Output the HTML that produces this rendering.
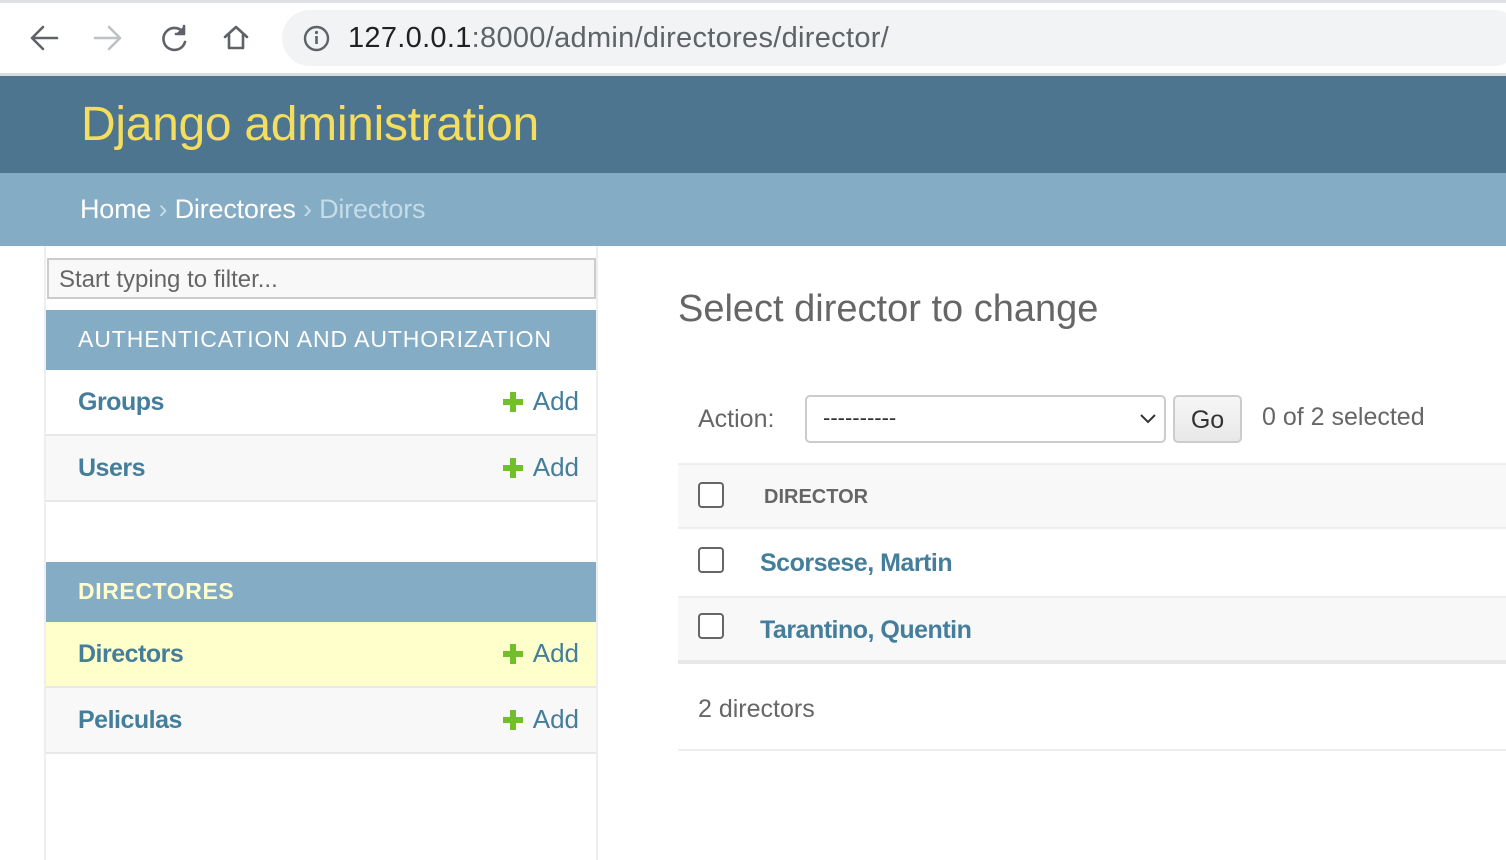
<!DOCTYPE html>
<html><head><meta charset="utf-8"><style>
*{margin:0;padding:0;box-sizing:border-box}
body{width:1506px;height:860px;overflow:hidden;background:#fff;font-family:"Liberation Sans",sans-serif;position:relative}
.a{position:absolute}
.row{position:absolute;left:46px;width:550px;height:66px;border-bottom:2px solid #e8e8e8}
.row .n{position:absolute;left:32px;top:18px;font-size:25px;font-weight:bold;color:#447e9b;letter-spacing:-0.5px}
.row .ad{position:absolute;right:17px;top:16px;font-size:26px;color:#447e9b}
.row .ad i{display:inline-block;width:20px;height:20px;margin-right:10px;position:relative;top:2px;background:linear-gradient(#70bf2b,#70bf2b) center/6px 20px no-repeat,linear-gradient(#70bf2b,#70bf2b) center/20px 6px no-repeat}
.cap{position:absolute;left:46px;width:550px;height:60px;background:#84acc5;color:#fff;font-size:23px;letter-spacing:0.9px;padding:16px 0 0 32px}
.cb{position:absolute;left:698px;width:26px;height:26px;border:2px solid #666;border-radius:4px;background:#fff}
.lnk{position:absolute;left:760px;font-size:25px;font-weight:bold;color:#447e9b;letter-spacing:-0.5px}
</style></head><body>
<div class="a" style="left:0;top:0;width:1506px;height:3px;background:#dee1e6"></div>
<div class="a" style="left:0;top:73px;width:1506px;height:3px;background:#dadce0"></div>
<svg class="a" style="left:25px;top:20px" width="240" height="36" viewBox="0 0 240 36">
<g fill="none" stroke-width="2.6" stroke-linecap="round" stroke-linejoin="round">
<path d="M32 18H7M18 7L7 18l11 11" stroke="#5f6368"/>
<path d="M70 18h25M84 7l11 11-11 11" stroke="#bdc1c6"/>
<path d="M158 12a11 11 0 1 0 2 10" stroke="#5f6368"/>
<path d="M159 6v8h-8" stroke="#5f6368" fill="#5f6368"/>
<path d="M200 17l11-10 11 10M204 14v14h14V14" stroke="#5f6368"/>
</g></svg>
<div class="a" style="left:282px;top:10px;width:1240px;height:56px;border-radius:28px;background:#f1f3f4"></div>
<svg class="a" style="left:303px;top:25px" width="27" height="27" viewBox="0 0 27 27"><circle cx="13.5" cy="13.5" r="11.5" fill="none" stroke="#5f6368" stroke-width="2.4"/><rect x="12.2" y="11" width="2.6" height="8" fill="#5f6368"/><circle cx="13.5" cy="7.5" r="1.6" fill="#5f6368"/></svg>
<div class="a" style="left:348px;top:22px;font-size:29px;color:#202124;letter-spacing:0.3px">127.0.0.1<span style="color:#5f6368">:8000/admin/directores/director/</span></div>
<div class="a" style="left:0;top:76px;width:1506px;height:97px;background:#4d7590"></div>
<div class="a" style="left:81px;top:97px;font-size:48px;color:#f5dd5d;letter-spacing:-0.3px">Django administration</div>
<div class="a" style="left:0;top:173px;width:1506px;height:73px;background:#84acc5"></div>
<div class="a" style="left:80px;top:194px;font-size:27px;color:#fff;letter-spacing:-0.2px">Home <span style="color:#c4dce8">›</span> Directores <span style="color:#c4dce8">›</span> <span style="color:#c4dce8">Directors</span></div>
<div class="a" style="left:44px;top:246px;width:2px;height:614px;background:#eee"></div>
<div class="a" style="left:596px;top:246px;width:2px;height:614px;background:#eee"></div>
<div class="a" style="left:47px;top:258px;width:549px;height:41px;border:2px solid #ccc;background:#f8f8f8;font-size:24px;color:#666;padding:6px 10px">Start typing to filter...</div>
<div class="cap" style="top:310px">AUTHENTICATION AND AUTHORIZATION</div>
<div class="row" style="top:370px;background:#fff"><span class="n">Groups</span><span class="ad"><i></i>Add</span></div>
<div class="row" style="top:436px;background:#f8f8f8"><span class="n">Users</span><span class="ad"><i></i>Add</span></div>
<div class="cap" style="top:562px;color:#ffffcc;font-weight:bold;letter-spacing:0.6px">DIRECTORES</div>
<div class="row" style="top:622px;background:#ffffcc"><span class="n">Directors</span><span class="ad"><i></i>Add</span></div>
<div class="row" style="top:688px;background:#f8f8f8"><span class="n">Peliculas</span><span class="ad"><i></i>Add</span></div>
<div class="a" style="left:678px;top:288px;font-size:38px;color:#666">Select director to change</div>
<div class="a" style="left:698px;top:405px;font-size:25px;color:#666">Action:</div>
<div class="a" style="left:805px;top:395px;width:361px;height:48px;border:2px solid #ccc;border-radius:5px;background:#fff;font-size:22px;color:#333;padding:8px 16px">----------</div>
<svg class="a" style="left:1139px;top:412px" width="18" height="14"><path d="M2 3l7 7 7-7" fill="none" stroke="#333" stroke-width="2"/></svg>
<div class="a" style="left:1173px;top:395px;width:69px;height:48px;border:2px solid #ccc;border-radius:5px;background:linear-gradient(#f6f6f6,#e8e8e8);font-size:25px;color:#333;text-align:center;padding-top:9px">Go</div>
<div class="a" style="left:1262px;top:403px;font-size:25px;color:#666">0 of 2 selected</div>
<div class="a" style="left:678px;top:463px;width:828px;height:66px;background:#f8f8f8;border-top:2px solid #eee;border-bottom:2px solid #eee"></div>
<div class="cb" style="top:482px"></div>
<div class="a" style="left:764px;top:486px;font-size:20px;font-weight:bold;color:#666">DIRECTOR</div>
<div class="a" style="left:678px;top:596px;width:828px;height:68px;background:#f8f8f8;border-top:2px solid #eee;border-bottom:4px solid #e8e8e8"></div>
<div class="cb" style="top:547px"></div>
<div class="lnk" style="top:549px">Scorsese, Martin</div>
<div class="cb" style="top:613px"></div>
<div class="lnk" style="top:616px">Tarantino, Quentin</div>
<div class="a" style="left:698px;top:695px;font-size:25px;color:#666">2 directors</div>
<div class="a" style="left:678px;top:749px;width:828px;height:2px;background:#eee"></div>
</body></html>
